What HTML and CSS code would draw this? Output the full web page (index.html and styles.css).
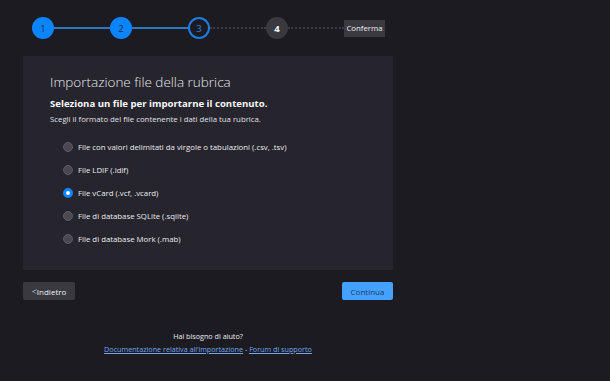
FILE: index.html
```html
<!DOCTYPE html>
<html lang="it">
<head>
  <meta charset="UTF-8" />
  <meta name="viewport" content="width=device-width, initial-scale=1" />
  <title>Importazione rubrica</title>
  <link rel="stylesheet" href="styles.css">
</head>
<body>
  <main class="wizard">

    <!-- Steps -->
    <ol class="steps">
      <li class="step done">1</li>
      <li class="link done"></li>
      <li class="step done">2</li>
      <li class="link done"></li>
      <li class="step current">3</li>
      <li class="link"></li>
      <li class="step todo">4</li>
      <li class="link"></li>
      <li class="step-final">Conferma</li>
    </ol>

    <!-- Panel -->
    <section class="panel" aria-labelledby="panel-title">
      <h1 id="panel-title" class="panel-title">Importazione file della rubrica</h1>
      <h2 class="panel-heading">Seleziona un file per importarne il contenuto.</h2>
      <p class="panel-desc">Scegli il formato del file contenente i dati della tua rubrica.</p>

      <div class="options">
        <label class="option"><input type="radio" name="format" value="csv"> <span>File con valori delimitati da virgole o tabulazioni (.csv, .tsv)</span></label>
        <label class="option"><input type="radio" name="format" value="ldif"> <span>File LDIF (.ldif)</span></label>
        <label class="option"><input type="radio" name="format" value="vcard" checked> <span>File vCard (.vcf, .vcard)</span></label>
        <label class="option"><input type="radio" name="format" value="sqlite"> <span>File di database SQLite (.sqlite)</span></label>
        <label class="option"><input type="radio" name="format" value="mab"> <span>File di database Mork (.mab)</span></label>
      </div>
    </section>

    <!-- Buttons -->
    <div class="actions">
      <button type="button" class="btn btn-back"><span class="chevron">&lt;</span>Indietro</button>
      <button type="button" class="btn btn-next">Continua</button>
    </div>

    <!-- Help -->
    <footer class="help">
      <p>Hai bisogno di aiuto?</p>
      <p>
        <a href="#">Documentazione relativa all’importazione</a>
        <span class="sep">-</span>
        <a href="#">Forum di supporto</a>
      </p>
    </footer>

  </main>
</body>
</html>
```

FILE: styles.css
```css
/* Base */
body {
  margin: 0;
  background: #1c1b22;
  color: #fbfbfe;
  font-family: 'Open Sans', 'Noto Sans', sans-serif;
}

.wizard {
  width: 370px;
  margin-left: 23px;
  padding-top: 17px;
}

/* Steps */
.steps {
  list-style: none;
  margin: 0 8px 0 9px;
  padding: 0;
  display: flex;
  align-items: center;
  height: 22px;
}

.step {
  width: 22px;
  height: 22px;
  border-radius: 50%;
  box-sizing: border-box;
  display: flex;
  align-items: center;
  justify-content: center;
  font-size: 9.5px;
  flex: none;
}

.step.done {
  background: #0a84ff;
  color: #1c2f4a;
}

.step.current {
  border: 2px solid #1f7de0;
  background: #1c1b22;
  color: #2f86de;
}

.step.todo {
  background: #3a3940;
  color: #fbfbfe;
  font-weight: 700;
}

.link {
  flex: 1;
  height: 0;
  border-top: 2px dotted #3d3c44;
}

.link.done {
  border-top: 2px solid #2d77c4;
}

.step-final {
  flex: none;
  width: 41px;
  height: 17px;
  background: #3a3940;
  font-size: 7.8px;
  display: flex;
  align-items: center;
  justify-content: center;
  color: #f0f0f4;
}

/* Panel */
.panel {
  margin-top: 17px;
  height: 214px;
  box-sizing: border-box;
  background: #26252e;
  padding: 17px 27px 0 27px;
}

.panel-title {
  margin: 0;
  font-size: 13.5px;
  font-weight: 300;
  line-height: 18px;
  color: #e8e8ec;
}

.panel-heading {
  margin: 5px 0 0 0;
  font-size: 9.6px;
  font-weight: 700;
  line-height: 15px;
  color: #fbfbfe;
}

.panel-desc {
  margin: 2px 0 0 0;
  font-size: 7.8px;
  line-height: 12px;
  color: #e0e0e6;
}

.options {
  margin-top: 16px;
  padding-left: 13px;
  display: flex;
  flex-direction: column;
  gap: 11px;
}

.option {
  display: flex;
  align-items: center;
  gap: 5px;
  height: 12px;
  font-size: 7.8px;
  color: #ececf0;
}

.option input {
  appearance: none;
  margin: 0;
  width: 10px;
  height: 10px;
  border-radius: 50%;
  background: #4a4951;
  border: 1px solid #5c5b63;
  box-sizing: border-box;
}

.option input:checked {
  background: #fbfbfe;
  border: 3px solid #0a84ff;
}

/* Buttons */
.actions {
  margin-top: 12px;
  display: flex;
  justify-content: space-between;
}

.btn {
  height: 18px;
  border: none;
  border-radius: 2px;
  font-family: inherit;
  font-size: 8px;
  padding: 0;
  cursor: pointer;
}

.btn-back {
  width: 52px;
  background: #3a3940;
  color: #f0f0f4;
}

.chevron {
  font-weight: 300;
  font-size: 9px;
}

.btn-next {
  width: 51px;
  background: #45a1ff;
  color: #1d3a5c;
}

/* Help */
.help {
  margin-top: 30px;
  text-align: center;
  font-size: 7.2px;
  line-height: 13px;
}

.help p {
  margin: 0;
  color: #ececf0;
}

.help a {
  color: #75a6e6;
}

.help .sep {
  color: #c0c0c6;
}
```
